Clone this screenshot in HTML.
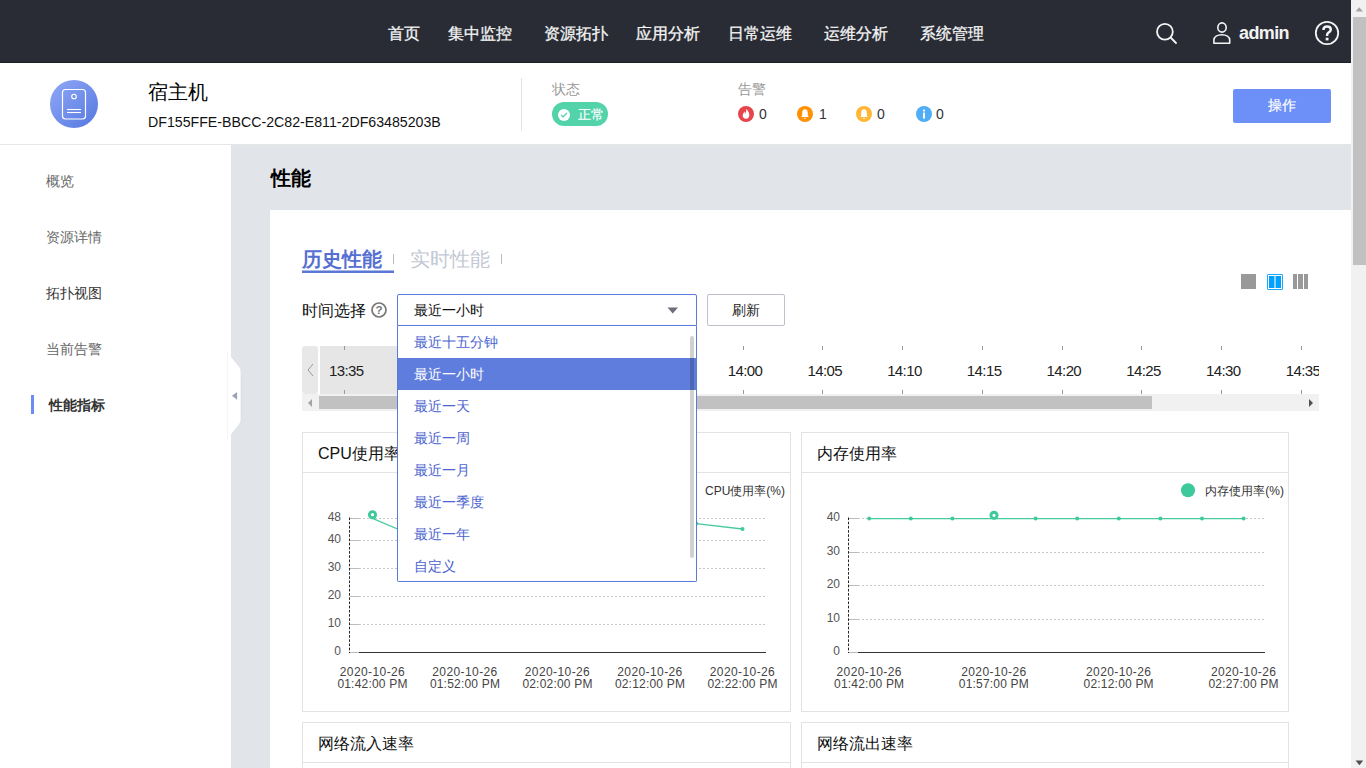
<!DOCTYPE html>
<html><head><meta charset="utf-8">
<style>
*{box-sizing:border-box;margin:0;padding:0}
html,body{width:1366px;height:768px;overflow:hidden;background:#fff;font-family:"Liberation Sans",sans-serif;color:#333}
.a{position:absolute;white-space:nowrap}
#nav{position:absolute;left:0;top:0;width:1366px;height:63px;background:#292c35;border-bottom:1px solid #1c1f26}
#nav .it{position:absolute;top:24px;font-size:16px;line-height:20px;color:#f4f4f4;-webkit-text-stroke:0.3px #f4f4f4}
#hdr{position:absolute;left:0;top:63px;width:1366px;height:82px;background:#fff;border-bottom:1px solid #e6e6e6}
#side{position:absolute;left:0;top:145px;width:231px;height:623px;background:#fff}
#side .mi{position:absolute;left:46px;font-size:14px;line-height:18px;color:#666}
#main{position:absolute;left:231px;top:145px;width:1135px;height:623px;background:#e1e4e9}
#card{position:absolute;left:270px;top:210px;width:1081px;height:558px;background:#fff}
#sb{position:absolute;left:1351px;top:0;width:15px;height:768px;background:#f1f1f1}
.lbl{font-size:14px;line-height:18px}
.dd{position:absolute;left:0;width:298px;height:32px;padding-left:16px;font-size:14px;line-height:32px;color:#4b64cf}
.tk{position:absolute;width:1px;height:4px;background:#999}
.tt{position:absolute;top:362px;font-size:15px;line-height:18px;color:#222;width:60px;text-align:center;letter-spacing:-0.6px}
.chart{position:absolute;border:1px solid #e3e3e3;background:#fff}
.chart .ttl{position:absolute;left:15px;top:11px;font-size:16px;line-height:20px;color:#111}
.chart .hl{position:absolute;left:0;top:39px;width:100%;height:1px;background:#e3e3e3}
</style></head><body>
<div id="nav">
  <div class="it" style="left:388px">首页</div>
  <div class="it" style="left:448px">集中监控</div>
  <div class="it" style="left:544px">资源拓扑</div>
  <div class="it" style="left:636px">应用分析</div>
  <div class="it" style="left:728px">日常运维</div>
  <div class="it" style="left:824px">运维分析</div>
  <div class="it" style="left:920px">系统管理</div>
  <svg class="a" style="left:1150px;top:18px" width="32" height="32" viewBox="0 0 32 32">
    <circle cx="14.9" cy="13.8" r="7.9" fill="none" stroke="#f4f4f4" stroke-width="1.8"/>
    <line x1="20.6" y1="19.5" x2="26" y2="25" stroke="#f4f4f4" stroke-width="1.8" stroke-linecap="round"/>
  </svg>
  <svg class="a" style="left:1210px;top:18px" width="24" height="28" viewBox="0 0 24 28">
    <ellipse cx="12" cy="9.5" rx="4.2" ry="4.6" fill="none" stroke="#f4f4f4" stroke-width="1.6"/>
    <path d="M3.9 25.2 V22.2 C3.9 18.6 7.4 16.7 11.8 16.7 C16.2 16.7 19.7 18.6 19.7 22.2 V25.2 Z" fill="none" stroke="#f4f4f4" stroke-width="1.6" stroke-linejoin="round"/>
  </svg>
  <div class="a" style="left:1239px;top:23px;font-size:18px;line-height:20px;font-weight:bold;color:#f2f2f2;letter-spacing:-0.6px">admin</div>
  <svg class="a" style="left:1313px;top:19px" width="28" height="28" viewBox="0 0 28 28">
    <circle cx="14" cy="14" r="11.2" fill="none" stroke="#f4f4f4" stroke-width="1.8"/>
    <path d="M10.4 11 C10.4 8.6 12 7.4 14.1 7.4 C16.2 7.4 17.8 8.7 17.8 10.6 C17.8 12.4 16.5 13.1 15.3 13.8 C14.4 14.4 14.1 15 14.1 16.2 L14.1 17" fill="none" stroke="#f4f4f4" stroke-width="2.5"/>
    <rect x="12.7" y="18.7" width="2.8" height="2.7" fill="#f4f4f4"/>
  </svg>
</div>
<div id="hdr">
  <svg class="a" style="left:50px;top:17px" width="48" height="48" viewBox="0 0 48 48">
    <defs><linearGradient id="g1" x1="0" y1="0" x2="1" y2="1"><stop offset="0" stop-color="#90a8f6"/><stop offset="1" stop-color="#5577e0"/></linearGradient></defs>
    <circle cx="24" cy="24" r="24" fill="url(#g1)"/>
    <rect x="12.5" y="9.5" width="23" height="29.5" rx="3" fill="none" stroke="#fff" stroke-width="1.2"/>
    <circle cx="24" cy="16.5" r="2.3" fill="none" stroke="#fff" stroke-width="1.1"/>
    <line x1="17" y1="29.5" x2="31" y2="29.5" stroke="#fff" stroke-width="1.1"/>
    <line x1="17" y1="32.5" x2="31" y2="32.5" stroke="#fff" stroke-width="1.1"/>
  </svg>
  <div class="a" style="left:148px;top:17px;font-size:20px;line-height:24px;color:#000">宿主机</div>
  <div class="a" style="left:148px;top:50px;font-size:15px;line-height:18px;color:#111;transform:scaleX(0.945);transform-origin:0 0">DF155FFE-BBCC-2C82-E811-2DF63485203B</div>
  <div class="a" style="left:521px;top:15px;width:1px;height:53px;background:#e3e3e3"></div>
  <div class="a" style="left:552px;top:16.5px;font-size:14px;line-height:18px;color:#999">状态</div>
  <div class="a" style="left:552px;top:39px;width:56px;height:24px;border-radius:12px;background:#52d3aa"></div>
  <svg class="a" style="left:557px;top:45px" width="14" height="14" viewBox="0 0 14 14">
    <circle cx="7" cy="6.9" r="6" fill="#fff"/>
    <path d="M4.1 7 L6.1 8.9 L9.9 5" fill="none" stroke="#52d3aa" stroke-width="1.3"/>
  </svg>
  <div class="a" style="left:578px;top:43px;font-size:13px;line-height:18px;color:#fff;-webkit-text-stroke:0.2px #fff">正常</div>
  <div class="a" style="left:738px;top:16.5px;font-size:14px;line-height:18px;color:#999">告警</div>
  <svg class="a" style="left:738px;top:43px" width="16" height="16" viewBox="0 0 16 16">
    <circle cx="8" cy="8" r="8" fill="#e5454b"/>
    <path d="M8.3 2.8 C9.8 4.8 11.5 6.6 11.3 9.4 C11.1 11.6 9.6 12.8 8 12.8 C6.2 12.8 4.7 11.5 4.7 9.5 C4.7 7.6 6 6.7 6.6 5.2 C7 6.3 7 7.3 6.8 8 C7.8 7 8.5 5.2 8.3 2.8 Z" fill="#fff"/>
  </svg>
  <div class="a" style="left:759px;top:42px;font-size:14px;line-height:18px;color:#333">0</div>
  <svg class="a" style="left:797px;top:43px" width="16" height="16" viewBox="0 0 16 16">
    <circle cx="8" cy="8" r="8" fill="#ff9100"/>
    <path d="M8 3.2 C6 3.2 5.2 4.8 5.2 6.8 L5.2 9.6 L4.2 11 L11.8 11 L10.8 9.6 L10.8 6.8 C10.8 4.8 10 3.2 8 3.2 Z" fill="#fff"/>
    <rect x="7.2" y="11.8" width="1.6" height="1" fill="#fff"/>
  </svg>
  <div class="a" style="left:819px;top:42px;font-size:14px;line-height:18px;color:#333">1</div>
  <svg class="a" style="left:856px;top:43px" width="16" height="16" viewBox="0 0 16 16">
    <circle cx="8" cy="8" r="8" fill="#ffb635"/>
    <path d="M8 3.2 C6 3.2 5.2 4.8 5.2 6.8 L5.2 9.6 L4.2 11 L11.8 11 L10.8 9.6 L10.8 6.8 C10.8 4.8 10 3.2 8 3.2 Z" fill="#fff"/>
    <rect x="7.2" y="11.8" width="1.6" height="1" fill="#fff"/>
  </svg>
  <div class="a" style="left:877px;top:42px;font-size:14px;line-height:18px;color:#333">0</div>
  <svg class="a" style="left:916px;top:43px" width="16" height="16" viewBox="0 0 16 16">
    <circle cx="8" cy="8" r="8" fill="#4faef5"/>
    <rect x="7" y="3.6" width="2" height="1.8" fill="#fff"/>
    <rect x="7" y="6.6" width="2" height="6" fill="#fff"/>
  </svg>
  <div class="a" style="left:936px;top:42px;font-size:14px;line-height:18px;color:#333">0</div>
  <div class="a" style="left:1233px;top:26px;width:98px;height:34px;border-radius:2px;background:#6c8ff8;color:#fff;font-size:14px;line-height:33px;text-align:center;-webkit-text-stroke:0.2px #fff">操作</div>
</div>
<div id="side">
  <div class="mi" style="top:27px">概览</div>
  <div class="mi" style="top:83px">资源详情</div>
  <div class="mi" style="top:139px;color:#333">拓扑视图</div>
  <div class="mi" style="top:195px">当前告警</div>
  <div class="a" style="left:31px;top:250px;width:3px;height:19px;background:#6b8cf5"></div>
  <div class="mi" style="top:251px;left:49px;font-weight:bold;color:#333">性能指标</div>
</div>
<div id="main">
  <div class="a" style="left:40px;top:20px;font-size:20px;line-height:26px;font-weight:bold;color:#000">性能</div>
</div>
<!-- collapse tab -->
<svg class="a" style="left:220px;top:350px" width="24" height="92" viewBox="0 0 24 92">
  <line x1="7.6" y1="3" x2="7.6" y2="89" stroke="#f4f4f6" stroke-width="1"/>
  <path d="M10 6.4 L11 6.4 L19.3 16.6 Q21 18.6 21 21 L21 70 Q21 72.4 19.3 74.4 L11 85 L10 85 Z" fill="#fff"/>
  <path d="M11 6.4 L19.3 16.6 Q21 18.6 21 21 L21 70 Q21 72.4 19.3 74.4 L11 85" fill="none" stroke="#d6d9df" stroke-width="0.6"/>
  <path d="M17.1 41.9 L17.1 49.8 L12 45.7 Z" fill="#9aa2b4"/>
</svg>
<div id="card"></div>

<!-- tabs -->
<div class="a" style="left:302px;top:247px;font-size:20px;line-height:24px;font-weight:bold;color:#5670d2">历史性能</div>
<div class="a" style="left:302px;top:270px;width:92px;height:1px;background:#a9b8ea"></div><div class="a" style="left:302px;top:271px;width:92px;height:2px;background:#5a77d6"></div>
<div class="a" style="left:393px;top:254px;width:1px;height:10px;background:#bbb"></div>
<div class="a" style="left:410px;top:247px;font-size:20px;line-height:24px;color:#c3c8d4">实时性能</div>
<div class="a" style="left:501px;top:254px;width:1px;height:10px;background:#bbb"></div>

<!-- layout icons -->
<div class="a" style="left:1241px;top:274px;width:15px;height:15px;background:#999"></div>
<div class="a" style="left:1267px;top:274px;width:16px;height:16px;border:1px solid #1ea8ff;border-radius:1px;background:#fff"></div>
<div class="a" style="left:1269px;top:276px;width:12px;height:12px;background:#00a2ff"></div>
<div class="a" style="left:1274px;top:276px;width:2px;height:12px;background:#8fd4ff"></div>
<div class="a" style="left:1293px;top:274px;width:4px;height:15px;background:#999"></div>
<div class="a" style="left:1298px;top:274px;width:5px;height:15px;background:#999"></div>
<div class="a" style="left:1304px;top:274px;width:4px;height:15px;background:#999"></div>

<!-- time select -->
<div class="a" style="left:302px;top:301px;font-size:16px;line-height:20px;color:#111">时间选择</div>
<svg class="a" style="left:371px;top:302px" width="16" height="16" viewBox="0 0 16 16">
  <circle cx="8" cy="8" r="7" fill="none" stroke="#777" stroke-width="1.7"/>
  <text x="8" y="12.2" text-anchor="middle" font-family="Liberation Sans" font-size="11.5" font-weight="bold" fill="#777">?</text>
</svg>
<div class="a" style="left:397px;top:294px;width:300px;height:32px;border:1px solid #5b7bdb;border-radius:2px 2px 0 0;background:#fff"></div>
<div class="a" style="left:414px;top:301px;font-size:14px;line-height:18px;color:#111">最近一小时</div>
<svg class="a" style="left:667px;top:307px" width="12" height="7" viewBox="0 0 12 7"><path d="M0.5 0.5 L11 0.5 L5.75 6.5 Z" fill="#6b6f7a"/></svg>
<div class="a" style="left:707px;top:294px;width:78px;height:32px;border:1px solid #bcc1cd;border-radius:2px;background:#fff;font-size:14px;line-height:30px;text-align:center;color:#222">刷新</div>

<!-- timeline -->
<div class="a" style="left:302px;top:346px;width:1017px;height:65px;overflow:hidden">
  <div class="a" style="left:0;top:0;width:16px;height:48px;border-radius:3px;background:#e8e8e8"></div>
  <svg class="a" style="left:3px;top:16px" width="10" height="16" viewBox="0 0 10 16"><path d="M8 2 L3 8 L8 14" fill="none" stroke="#999" stroke-width="1"/></svg>
  <div class="a" style="left:18px;top:0;width:370px;height:48px;background:#e6e6e6"></div>
  <div class="a" style="left:0;top:48px;width:1017px;height:17px;background:#f1f1f1"></div>
  <div class="a" style="left:17px;top:50px;width:833px;height:13px;background:#c1c1c1"></div>
  <svg class="a" style="left:4px;top:52px" width="8" height="10" viewBox="0 0 8 10"><path d="M6 1 L2 5 L6 9 Z" fill="#a3a3a3"/></svg>
  <svg class="a" style="left:1005px;top:52px" width="8" height="10" viewBox="0 0 8 10"><path d="M2 1 L6 5 L2 9 Z" fill="#505050"/></svg>
</div>
<div class="a" style="left:0;top:0;width:1319px;height:768px;overflow:hidden"><div class="tk" style="left:344.00px;top:346px"></div><div class="tk" style="left:344.00px;top:390px"></div><div class="tt" style="left:316.30px">13:35</div><div class="tk" style="left:423.73px;top:346px"></div><div class="tk" style="left:423.73px;top:390px"></div><div class="tt" style="left:396.03px">13:40</div><div class="tk" style="left:503.46px;top:346px"></div><div class="tk" style="left:503.46px;top:390px"></div><div class="tt" style="left:475.76px">13:45</div><div class="tk" style="left:583.19px;top:346px"></div><div class="tk" style="left:583.19px;top:390px"></div><div class="tt" style="left:555.49px">13:50</div><div class="tk" style="left:662.92px;top:346px"></div><div class="tk" style="left:662.92px;top:390px"></div><div class="tt" style="left:635.22px">13:55</div><div class="tk" style="left:742.65px;top:346px"></div><div class="tk" style="left:742.65px;top:390px"></div><div class="tt" style="left:714.95px">14:00</div><div class="tk" style="left:822.38px;top:346px"></div><div class="tk" style="left:822.38px;top:390px"></div><div class="tt" style="left:794.68px">14:05</div><div class="tk" style="left:902.11px;top:346px"></div><div class="tk" style="left:902.11px;top:390px"></div><div class="tt" style="left:874.41px">14:10</div><div class="tk" style="left:981.84px;top:346px"></div><div class="tk" style="left:981.84px;top:390px"></div><div class="tt" style="left:954.14px">14:15</div><div class="tk" style="left:1061.57px;top:346px"></div><div class="tk" style="left:1061.57px;top:390px"></div><div class="tt" style="left:1033.87px">14:20</div><div class="tk" style="left:1141.30px;top:346px"></div><div class="tk" style="left:1141.30px;top:390px"></div><div class="tt" style="left:1113.60px">14:25</div><div class="tk" style="left:1221.03px;top:346px"></div><div class="tk" style="left:1221.03px;top:390px"></div><div class="tt" style="left:1193.33px">14:30</div><div class="tk" style="left:1300.76px;top:346px"></div><div class="tk" style="left:1300.76px;top:390px"></div><div class="tt" style="left:1273.06px">14:35</div></div>

<!-- charts -->
<div class="chart" style="left:302px;top:432px;width:489px;height:280px">
  <div class="ttl">CPU使用率</div><div class="hl"></div>
</div>
<div class="chart" style="left:801px;top:432px;width:488px;height:280px">
  <div class="ttl">内存使用率</div><div class="hl"></div>
</div>
<div class="chart" style="left:302px;top:722px;width:489px;height:60px">
  <div class="ttl">网络流入速率</div><div class="hl"></div>
</div>
<div class="chart" style="left:801px;top:722px;width:488px;height:60px">
  <div class="ttl">网络流出速率</div><div class="hl"></div>
</div>
<svg class="a" style="left:0;top:0" width="1366" height="768" viewBox="0 0 1366 768" font-family="Liberation Sans">
<line x1="350.0" y1="518.5" x2="359" y2="518.5" stroke="#bbb" stroke-width="1"/>
<line x1="359" y1="518.5" x2="766" y2="518.5" stroke="#c8c8c8" stroke-width="1" stroke-dasharray="2,2"/>
<text x="341" y="521.0" text-anchor="end" font-size="12" fill="#555">48</text>
<line x1="350.0" y1="540.5" x2="359" y2="540.5" stroke="#bbb" stroke-width="1"/>
<line x1="359" y1="540.5" x2="766" y2="540.5" stroke="#c8c8c8" stroke-width="1" stroke-dasharray="2,2"/>
<text x="341" y="543.0" text-anchor="end" font-size="12" fill="#555">40</text>
<line x1="350.0" y1="568.5" x2="359" y2="568.5" stroke="#bbb" stroke-width="1"/>
<line x1="359" y1="568.5" x2="766" y2="568.5" stroke="#c8c8c8" stroke-width="1" stroke-dasharray="2,2"/>
<text x="341" y="571.0" text-anchor="end" font-size="12" fill="#555">30</text>
<line x1="350.0" y1="596.5" x2="359" y2="596.5" stroke="#bbb" stroke-width="1"/>
<line x1="359" y1="596.5" x2="766" y2="596.5" stroke="#c8c8c8" stroke-width="1" stroke-dasharray="2,2"/>
<text x="341" y="599.0" text-anchor="end" font-size="12" fill="#555">20</text>
<line x1="350.0" y1="624.5" x2="359" y2="624.5" stroke="#bbb" stroke-width="1"/>
<line x1="359" y1="624.5" x2="766" y2="624.5" stroke="#c8c8c8" stroke-width="1" stroke-dasharray="2,2"/>
<text x="341" y="627.0" text-anchor="end" font-size="12" fill="#555">10</text>
<line x1="350.0" y1="652.5" x2="359" y2="652.5" stroke="#bbb" stroke-width="1"/>
<line x1="359" y1="652.5" x2="766" y2="652.5" stroke="#333" stroke-width="1"/>
<text x="341" y="655.0" text-anchor="end" font-size="12" fill="#555">0</text>
<line x1="349.5" y1="517.5" x2="349.5" y2="653" stroke="#222" stroke-width="1" stroke-dasharray="2.6,1.6"/>
<text x="372.5" y="676" text-anchor="middle" font-size="12" fill="#444" letter-spacing="0.4">2020-10-26</text>
<text x="372.5" y="687.5" text-anchor="middle" font-size="12" fill="#444" letter-spacing="0.2">01:42:00 PM</text>
<text x="465" y="676" text-anchor="middle" font-size="12" fill="#444" letter-spacing="0.4">2020-10-26</text>
<text x="465" y="687.5" text-anchor="middle" font-size="12" fill="#444" letter-spacing="0.2">01:52:00 PM</text>
<text x="557.5" y="676" text-anchor="middle" font-size="12" fill="#444" letter-spacing="0.4">2020-10-26</text>
<text x="557.5" y="687.5" text-anchor="middle" font-size="12" fill="#444" letter-spacing="0.2">02:02:00 PM</text>
<text x="650" y="676" text-anchor="middle" font-size="12" fill="#444" letter-spacing="0.4">2020-10-26</text>
<text x="650" y="687.5" text-anchor="middle" font-size="12" fill="#444" letter-spacing="0.2">02:12:00 PM</text>
<text x="742.5" y="676" text-anchor="middle" font-size="12" fill="#444" letter-spacing="0.4">2020-10-26</text>
<text x="742.5" y="687.5" text-anchor="middle" font-size="12" fill="#444" letter-spacing="0.2">02:22:00 PM</text>
<path d="M372.5 518.3 L418.8 538.0 L465.0 545.0 L511.2 540.0 L557.5 532.0 L603.8 527.0 L650.0 525.0 L696.2 523.6 L742.5 529.0" fill="none" stroke="#48caa1" stroke-width="1.3" stroke-linejoin="round"/>
<circle cx="372.5" cy="514.6999999999999" r="3.1" fill="#fff" stroke="#3ec99c" stroke-width="2.9"/>
<circle cx="418.75" cy="538" r="2" fill="#3ec99c"/>
<circle cx="465.0" cy="545" r="2" fill="#3ec99c"/>
<circle cx="511.25" cy="540" r="2" fill="#3ec99c"/>
<circle cx="557.5" cy="532" r="2" fill="#3ec99c"/>
<circle cx="603.75" cy="527" r="2" fill="#3ec99c"/>
<circle cx="650.0" cy="525" r="2" fill="#3ec99c"/>
<circle cx="696.25" cy="523.6" r="2" fill="#3ec99c"/>
<circle cx="742.5" cy="529" r="2" fill="#3ec99c"/>
<text x="785" y="494.5" text-anchor="end" font-size="12" fill="#333">CPU使用率(%)</text>
<line x1="849.0" y1="518.5" x2="858" y2="518.5" stroke="#bbb" stroke-width="1"/>
<line x1="858" y1="518.5" x2="1265" y2="518.5" stroke="#c8c8c8" stroke-width="1" stroke-dasharray="2,2"/>
<text x="840" y="521.0" text-anchor="end" font-size="12" fill="#555">40</text>
<line x1="849.0" y1="552.5" x2="858" y2="552.5" stroke="#bbb" stroke-width="1"/>
<line x1="858" y1="552.5" x2="1265" y2="552.5" stroke="#c8c8c8" stroke-width="1" stroke-dasharray="2,2"/>
<text x="840" y="555.0" text-anchor="end" font-size="12" fill="#555">30</text>
<line x1="849.0" y1="585.5" x2="858" y2="585.5" stroke="#bbb" stroke-width="1"/>
<line x1="858" y1="585.5" x2="1265" y2="585.5" stroke="#c8c8c8" stroke-width="1" stroke-dasharray="2,2"/>
<text x="840" y="588.0" text-anchor="end" font-size="12" fill="#555">20</text>
<line x1="849.0" y1="619.5" x2="858" y2="619.5" stroke="#bbb" stroke-width="1"/>
<line x1="858" y1="619.5" x2="1265" y2="619.5" stroke="#c8c8c8" stroke-width="1" stroke-dasharray="2,2"/>
<text x="840" y="622.0" text-anchor="end" font-size="12" fill="#555">10</text>
<line x1="849.0" y1="652.5" x2="858" y2="652.5" stroke="#bbb" stroke-width="1"/>
<line x1="858" y1="652.5" x2="1265" y2="652.5" stroke="#333" stroke-width="1"/>
<text x="840" y="655.0" text-anchor="end" font-size="12" fill="#555">0</text>
<line x1="848.5" y1="517.5" x2="848.5" y2="653" stroke="#222" stroke-width="1" stroke-dasharray="2.6,1.6"/>
<text x="869.2" y="676" text-anchor="middle" font-size="12" fill="#444" letter-spacing="0.4">2020-10-26</text>
<text x="869.2" y="687.5" text-anchor="middle" font-size="12" fill="#444" letter-spacing="0.2">01:42:00 PM</text>
<text x="993.9" y="676" text-anchor="middle" font-size="12" fill="#444" letter-spacing="0.4">2020-10-26</text>
<text x="993.9" y="687.5" text-anchor="middle" font-size="12" fill="#444" letter-spacing="0.2">01:57:00 PM</text>
<text x="1118.7" y="676" text-anchor="middle" font-size="12" fill="#444" letter-spacing="0.4">2020-10-26</text>
<text x="1118.7" y="687.5" text-anchor="middle" font-size="12" fill="#444" letter-spacing="0.2">02:12:00 PM</text>
<text x="1243.6" y="676" text-anchor="middle" font-size="12" fill="#444" letter-spacing="0.4">2020-10-26</text>
<text x="1243.6" y="687.5" text-anchor="middle" font-size="12" fill="#444" letter-spacing="0.2">02:27:00 PM</text>
<path d="M869.2 518.6 L910.8 518.6 L952.4 518.6 L994.0 518.6 L1035.6 518.6 L1077.2 518.6 L1118.8 518.6 L1160.4 518.6 L1202.0 518.6 L1243.6 518.6" fill="none" stroke="#48caa1" stroke-width="1.3" stroke-linejoin="round"/>
<circle cx="869.2" cy="518.6" r="2" fill="#3ec99c"/>
<circle cx="910.8000000000001" cy="518.6" r="2" fill="#3ec99c"/>
<circle cx="952.4000000000001" cy="518.6" r="2" fill="#3ec99c"/>
<circle cx="994.0" cy="515.3000000000001" r="3.1" fill="#fff" stroke="#3ec99c" stroke-width="2.9"/>
<circle cx="1035.6000000000001" cy="518.6" r="2" fill="#3ec99c"/>
<circle cx="1077.2" cy="518.6" r="2" fill="#3ec99c"/>
<circle cx="1118.8000000000002" cy="518.6" r="2" fill="#3ec99c"/>
<circle cx="1160.4" cy="518.6" r="2" fill="#3ec99c"/>
<circle cx="1202.0" cy="518.6" r="2" fill="#3ec99c"/>
<circle cx="1243.6000000000001" cy="518.6" r="2" fill="#3ec99c"/>
<circle cx="1188" cy="490.3" r="7" fill="#3ec99c"/>
<text x="1284" y="494.5" text-anchor="end" font-size="12" fill="#333">内存使用率(%)</text>
</svg>

<!-- dropdown -->
<div class="a" style="left:397px;top:326px;width:300px;height:256px;border:1px solid #5b7bdb;border-top:none;border-radius:0 0 2px 2px;background:#fff;overflow:hidden">
  <div class="dd" style="top:0">最近十五分钟</div>
  <div class="dd" style="top:32px;background:#5f7ddc;color:#fff">最近一小时</div>
  <div class="dd" style="top:64px">最近一天</div>
  <div class="dd" style="top:96px">最近一周</div>
  <div class="dd" style="top:128px">最近一月</div>
  <div class="dd" style="top:160px">最近一季度</div>
  <div class="dd" style="top:192px">最近一年</div>
  <div class="dd" style="top:224px">自定义</div>
  <div class="a" style="left:292px;top:10px;width:4px;height:222px;border-radius:2px;background:rgba(0,0,0,0.18)"></div>
</div>
<!-- page scrollbar -->
<div id="sb">
  <svg class="a" style="left:4px;top:5.5px" width="9" height="6" viewBox="0 0 9 6"><path d="M0.6 5.4 L4.3 1.2 L8 5.4 Z" fill="#a3a3a3"/></svg>
  <div class="a" style="left:2px;top:17px;width:13px;height:248px;background:#c1c1c1"></div>
  <svg class="a" style="left:4px;top:760px" width="9" height="6" viewBox="0 0 9 6"><path d="M0.6 0.6 L8.2 0.6 L4.4 5.2 Z" fill="#505050"/></svg>
</div>
</body></html>
